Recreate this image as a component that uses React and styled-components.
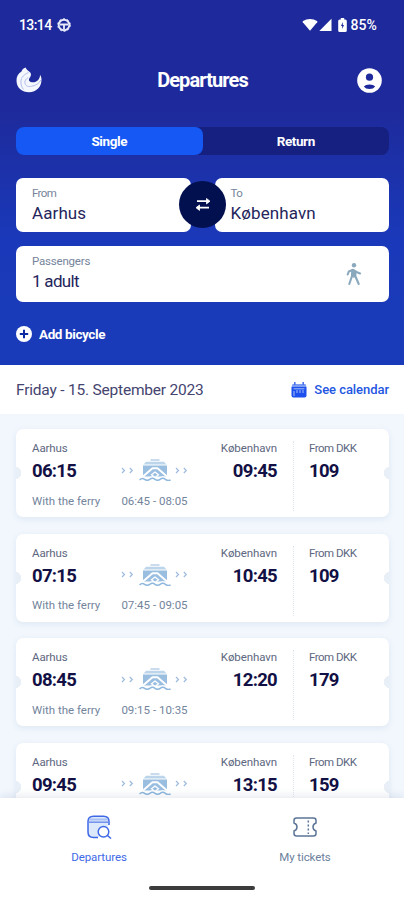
//IMPORT FUNCTIONALITY
import React, { useState } from 'react'
import styled, { createGlobalStyle } from 'styled-components'

const departures = [
	{ id: 1, from: '06:15', to: '09:45', price: '109', ferry: '06:45 - 08:05' },
	{ id: 2, from: '07:15', to: '10:45', price: '109', ferry: '07:45 - 09:05' },
	{ id: 3, from: '08:45', to: '12:20', price: '179', ferry: '09:15 - 10:35' },
	{ id: 4, from: '09:45', to: '13:15', price: '159' },
]

export default function App() {
	const [trip, setTrip] = useState('Single')

	return (
		<Screen>
			<GlobalStyle />
			<Search>
				<StatusBar>
					<StatusGroup $gap="5px">
						<StatusText $spacing="-0.6px">13:14</StatusText>
						<WheelIcon />
					</StatusGroup>
					<StatusGroup $gap="1px">
						<WifiIcon />
						<SignalIcon />
						<BatteryIcon />
						<StatusText $spacing="0.1px">85%</StatusText>
					</StatusGroup>
				</StatusBar>
				<Header>
					<LogoIcon />
					<Title>Departures</Title>
					<ProfileIcon />
				</Header>
				<Tabs>
					<Tab
						className={trip === 'Single' ? 'isActive' : ''}
						onClick={() => setTrip('Single')}
					>
						Single
					</Tab>
					<Tab
						className={trip === 'Return' ? 'isActive' : ''}
						onClick={() => setTrip('Return')}
					>
						Return
					</Tab>
				</Tabs>
				<Route>
					<Field>
						<FieldLabel $spacing="-0.6px">From</FieldLabel>
						<FieldValue>Aarhus</FieldValue>
					</Field>
					<Field>
						<FieldLabel $spacing="-0.6px">To</FieldLabel>
						<FieldValue>København</FieldValue>
					</Field>
					<SwapButton>
						<SwapIcon />
					</SwapButton>
				</Route>
				<Passengers>
					<div>
						<FieldLabel $spacing="-0.2px">Passengers</FieldLabel>
						<FieldValue $spacing="-0.7px">1 adult</FieldValue>
					</div>
					<WalkIcon />
				</Passengers>
				<AddBicycle>
					<PlusIcon />
					<AddLabel>Add bicycle</AddLabel>
				</AddBicycle>
			</Search>
			<DateBar>
				<DateText>Friday - 15. September 2023</DateText>
				<CalendarLink>
					<CalendarIcon />
					<CalendarText>See calendar</CalendarText>
				</CalendarLink>
			</DateBar>
			<List>
				{departures.map((departure) => (
					<Card key={departure.id}>
						<Place>Aarhus</Place>
						<Place $right>København</Place>
						<Time>{departure.from}</Time>
						<Crossing>
							<Chevrons />
							<FerryIcon />
							<Chevrons />
						</Crossing>
						<Time $right>{departure.to}</Time>
						{departure.ferry && (
							<>
								<Note>With the ferry</Note>
								<Note $center>{departure.ferry}</Note>
							</>
						)}
						<Price>
							<Place $spacing="-0.5px">From DKK</Place>
							<Time>{departure.price}</Time>
						</Price>
					</Card>
				))}
			</List>
			<Nav>
				<NavRow>
					<NavItem className="isActive" $shift="-4px">
						<DeparturesIcon />
						<NavLabel $spacing="-0.1px">Departures</NavLabel>
					</NavItem>
					<NavItem $shift="4px">
						<TicketIcon />
						<NavLabel $spacing="-0.1px">My tickets</NavLabel>
					</NavItem>
				</NavRow>
				<HomeIndicator />
			</Nav>
		</Screen>
	)
}

//ICONS
function WheelIcon() {
	return (
		<svg width="14" height="14" viewBox="0 0 14 14" fill="none">
			<circle cx="7" cy="7" r="5.3" stroke="#e8eafa" strokeWidth="1.9" />
			<circle cx="7" cy="7" r="6.3" stroke="#e8eafa" strokeWidth="1" strokeDasharray="2 2" />
			<path d="M3 6.500H11M7 7V11.500" stroke="#e8eafa" strokeWidth="1.800" />
		</svg>
	)
}

function WifiIcon() {
	return (
		<svg width="16" height="14" viewBox="0 0 16 14" fill="#fff">
			<path d="M8 12.800L.8 4.200Q.4 3.600 1 3.100Q4 1.100 8 1.100T15 3.100Q15.600 3.600 15.200 4.200Z" />
		</svg>
	)
}

function SignalIcon() {
	return (
		<svg width="13" height="14" viewBox="0 0 13 14" fill="#fff">
			<path d="M.3 13L12.500.7V13Z" />
		</svg>
	)
}

function BatteryIcon() {
	return (
		<Battery width="9" height="14" viewBox="0 0 9 14">
			<path d="M2.800 0H6.200V1.500H7.200Q8.800 1.500 8.800 3V12.500Q8.800 14 7.200 14H1.800Q.2 14 .2 12.500V3Q.2 1.500 1.800 1.500H2.800Z" fill="#fff" />
			<path d="M4.800 4L3 8H4.200V11L6 7H4.800Z" fill="#1e2a9b" />
		</Battery>
	)
}

function LogoIcon() {
	return (
		<svg width="26" height="26" viewBox="0 0 26 26">
			<path d="M9.500.5C7.500 1.200 6 2.800 5.500 4.500C2 6.500.3 10 .5 14C.8 21 6.200 25.300 13 25.300C20.500 25.300 25.700 19.500 25.500 12.500C25.400 10.500 25 9 24 8C24.100 12 21 15.300 17 15.300C15.300 15.300 14 14.800 13.300 14C12.500 12.800 13.200 11.200 14.200 10C15.300 8.500 15.300 6.500 14 5.200C12.500 4 10.500 2.500 9.500.5Z" fill="#f5f7ff" />
			<path d="M12.500 5.500C8.500 7.500 4.800 10 4.900 15C5 18 5.800 20.500 7.500 22.500M12.300 10.500C9.500 12 8.500 14 9 16.500C10 19.500 12.500 20 15.500 19.300C19.500 18.500 23 17 24.800 13" fill="none" stroke="#a9b5e6" strokeWidth=".9" />
		</svg>
	)
}

function ProfileIcon() {
	return (
		<svg width="25" height="25" viewBox="0 0 25 25">
			<circle cx="12.500" cy="12.500" r="12.300" fill="#fff" />
			<circle cx="12.500" cy="9.200" r="3.600" fill="#1e2a9b" />
			<path d="M6.800 18.500Q8.500 16.400 12.500 16.400T18.200 18.500Q16.500 21 12.500 21T6.800 18.500Z" fill="#1e2a9b" />
		</svg>
	)
}

function SwapIcon() {
	return (
		<svg width="16" height="15" viewBox="0 0 16 15" stroke="#fff" strokeWidth="1.700" fill="#fff">
			<path d="M2 4.200H12M14 10.700H4" />
			<path d="M11.500 1.500L15 4.200L11.500 6.900ZM4.500 8L1 10.700L4.500 13.400Z" strokeWidth=".8" />
		</svg>
	)
}

function WalkIcon() {
	return (
		<svg width="16" height="23" viewBox="0 0 16 23" fill="none" stroke="#8ba9bd" strokeWidth="2.100" strokeLinecap="round" strokeLinejoin="round">
			<circle cx="8" cy="2.300" r="2.200" fill="#8ba9bd" stroke="none" />
			<path d="M1.700 11.500L2.800 8.500L7 6.800L10.500 9L14 10.500M6.200 7.800L6 13L3.300 21M9.500 8.500L9.300 13L12.700 21M6 13.300H9.300" />
			<path d="M7.800 8V13" strokeWidth="3" />
		</svg>
	)
}

function PlusIcon() {
	return (
		<svg width="16" height="16" viewBox="0 0 16 16">
			<circle cx="8" cy="8" r="8" fill="#fff" />
			<path d="M8 3.800V12.200M3.800 8H12.200" stroke="#0f2aa5" strokeWidth="2" />
		</svg>
	)
}

function CalendarIcon() {
	return (
		<svg width="16" height="16" viewBox="0 0 16 16">
			<path d="M1.500 2H14.500L15.500 5H.5Z" fill="#7d9cf2" />
			<path d="M3.800 0V3M12.200 0V3" stroke="#4d76ee" strokeWidth="1.600" />
			<path d="M.5 5H15.500V13.500Q15.500 15.500 13.500 15.500H2.500Q.5 15.500.5 13.500Z" fill="#1d50ec" />
			<path d="M2.500 6.800H13.500M3 9V14M6 8V11M9 8V11M12 8V11" stroke="#a9c0fa" strokeWidth="1" />
		</svg>
	)
}

function Chevrons() {
	return (
		<svg width="13" height="7" viewBox="0 0 13 7" fill="none" stroke="#9dbbde" strokeWidth="1.200">
			<path d="M1 1L3.500 3.500L1 6M8.800 1L11.300 3.500L8.800 6" />
		</svg>
	)
}

function FerryIcon() {
	return (
		<svg width="32" height="22" viewBox="0 0 32 22">
			<path d="M11.500 1H20.500" stroke="#b7cfe6" strokeWidth="1.500" />
			<path d="M7 2.700H25L27.500 5.500H4.500Z" fill="#bdd5ea" />
			<path d="M4 6.500H28V17.500H4Z" fill="#99bee0" />
			<path d="M4 17.500L13.500 9.300H18.500L28 17.500" fill="none" stroke="#fff" strokeWidth="1.900" />
			<path d="M16 13L19.500 15.800L16 18.500L12.500 15.800Z" fill="#99bee0" stroke="#fff" strokeWidth="1.300" />
			<path d="M.5 19.500Q3 17.500 5.600 19T10.800 19T16 19T21.200 19T26.400 19T31.500 19.500" fill="none" stroke="#fff" strokeWidth="2" />
			<path d="M.5 21Q3 18.400 5.600 20.300T10.800 20.300T16 20.300T21.200 20.300T26.400 20.300T31.500 21" fill="none" stroke="#8fb8de" strokeWidth="1.500" />
		</svg>
	)
}

function DeparturesIcon() {
	return (
		<svg width="25" height="24" viewBox="0 0 25 24" fill="none" stroke="#3f68e6" strokeWidth="1.500">
			<path d="M11 22.500H6.500Q1 22.500 1 17V6.500Q1 1.200 6.500 1.200H16.500Q22 1.200 22 6.500V10" fill="#dbe9fb" />
			<path d="M2.300 4.500H20.700" stroke="#a9c0f5" strokeWidth="2" />
			<path d="M1.500 7.200H21.500" stroke="#6f8fee" />
			<circle cx="16.500" cy="16.800" r="5.300" fill="#fff" />
			<path d="M20.500 20.500L24 23.500" />
		</svg>
	)
}

function TicketIcon() {
	return (
		<svg width="24" height="20" viewBox="0 0 24 20" fill="none" stroke="#5c7597" strokeWidth="1.500">
			<path d="M3.500 1H20.500Q23 1 23 3.500V6Q20 7 20 10T23 14V16.500Q23 19 20.500 19H3.500Q1 19 1 16.500V14Q4 13 4 10T1 6V3.500Q1 1 3.500 1Z" />
			<path d="M15.300 3.500V17" strokeDasharray="2 2" />
		</svg>
	)
}

//STYLES
const GlobalStyle = createGlobalStyle`
	* {
		box-sizing: border-box;
	}
	body {
		margin: 0;
		font-family: Roboto, 'Liberation Sans', sans-serif;
	}
	p, h1 {
		margin: 0;
		white-space: nowrap;
	}
	svg {
		display: block;
		flex: none;
	}
	button {
		border: none;
		padding: 0;
		font-family: inherit;
		background: none;
	}
`

const Screen = styled.div`
	width: 404px;
	height: 900px;
	overflow: hidden;
	display: flex;
	flex-direction: column;
	background: #f2f7fd;
`

const Search = styled.section`
	height: 365px;
	flex: none;
	padding: 0 15px 0 16px;
	background: linear-gradient(#1e2a9b 0, #1e2a9b 108px, #1a39ba 240px, #193bb9 365px);
`

const StatusBar = styled.div`
	height: 49px;
	padding: 0 12px 0 3px;
	display: flex;
	justify-content: space-between;
	align-items: center;
`

const StatusGroup = styled.div`
	display: flex;
	align-items: center;
	gap: ${(props) => props.$gap};
`

const StatusText = styled.p`
	color: #fff;
	font-size: 14px;
	font-weight: 500;
	line-height: 16px;
	letter-spacing: ${(props) => props.$spacing};
`

const Battery = styled.svg`
	margin: 0 2px 0 5px;
`

const Header = styled.header`
	height: 62px;
	padding-right: 7px;
	display: flex;
	justify-content: space-between;
	align-items: center;
`

const Title = styled.h1`
	color: #fff;
	font-size: 20px;
	font-weight: 700;
	letter-spacing: -0.9px;
	padding-left: 6px;
`

const Tabs = styled.div`
	height: 28px;
	margin-top: 16px;
	display: grid;
	grid-template-columns: 1fr 1fr;
	border-radius: 8px;
	background: #152080;
`

const Tab = styled.button`
	color: #fff;
	font-size: 13.5px;
	font-weight: 700;
	letter-spacing: -0.4px;
	border-radius: 8px;
	&.isActive {
		background: #1658f3;
	}
`

const Route = styled.div`
	position: relative;
	height: 54px;
	margin-top: 23px;
	display: grid;
	grid-template-columns: 1fr 1fr;
	gap: 24px;
`

const Field = styled.div`
	padding: 8px 16px 0;
	border-radius: 7px;
	background: #fff;
`

const FieldLabel = styled.p`
	color: #75849a;
	font-size: 11.5px;
	line-height: 14px;
	letter-spacing: ${(props) => props.$spacing};
`

const FieldValue = styled.p`
	color: #25255c;
	font-size: 17px;
	line-height: 22px;
	letter-spacing: ${(props) => props.$spacing || '0.1px'};
	margin-top: 2px;
`

const SwapButton = styled.button`
	position: absolute;
	top: 3px;
	left: 163px;
	width: 47px;
	height: 47px;
	border-radius: 50%;
	background: #03104f;
	display: flex;
	justify-content: center;
	align-items: center;
`

const Passengers = styled(Field)`
	height: 56px;
	margin-top: 14px;
	padding-right: 27px;
	display: flex;
	justify-content: space-between;
	svg {
		margin-top: 9px;
	}
`

const AddBicycle = styled.button`
	margin-top: 24px;
	height: 16px;
	display: flex;
	align-items: center;
	gap: 7px;
`

const AddLabel = styled.p`
	color: #fff;
	font-size: 13.5px;
	font-weight: 700;
	letter-spacing: -0.4px;
`

const DateBar = styled.div`
	height: 49px;
	flex: none;
	padding: 0 15px 0 16px;
	display: flex;
	justify-content: space-between;
	align-items: center;
	background: #fff;
`

const DateText = styled.p`
	color: #44446f;
	font-size: 15.5px;
	letter-spacing: -0.2px;
`

const CalendarLink = styled.div`
	display: flex;
	align-items: center;
	gap: 7px;
`

const CalendarText = styled.p`
	color: #2356e2;
	font-size: 13px;
	font-weight: 500;
	letter-spacing: -0.05px;
`

const List = styled.div`
	flex: 1;
	min-height: 0;
	overflow: hidden;
	padding: 15px 15px 0 16px;
	display: flex;
	flex-direction: column;
	gap: 16.5px;
`

const Card = styled.article`
	height: 88px;
	flex: none;
	padding: 12px 16px 0;
	display: grid;
	grid-template-columns: 89px 67px 89px 1fr;
	grid-template-rows: 16px 29px 29px;
	align-items: center;
	border-radius: 7px;
	background: radial-gradient(circle at -1px 44px, #e9eff6 6px, transparent 6.5px),
		radial-gradient(circle at 374px 44px, #e9eff6 6px, transparent 6.5px), #fff;
	box-shadow: 0 2px 6px rgba(80, 120, 170, 0.12);
`

const Place = styled.p`
	color: #5d6780;
	font-size: 11.5px;
	line-height: 14px;
	padding-bottom: 2px;
	letter-spacing: ${(props) => props.$spacing || '-0.1px'};
	${(props) => props.$right && 'grid-column: 2 / 4; text-align: right;'}
`

const Time = styled.p`
	color: #121044;
	font-size: 18.5px;
	font-weight: 700;
	line-height: 29px;
	letter-spacing: -0.7px;
	${(props) => props.$right && 'text-align: right;'}
`

const Crossing = styled.div`
	display: flex;
	align-items: center;
	justify-content: space-between;
	padding-bottom: 3px;
`

const Note = styled.p`
	color: #73849c;
	font-size: 11.5px;
	letter-spacing: 0;
	${(props) => props.$center && 'text-align: center;'}
`

const Price = styled.div`
	grid-column: 4;
	grid-row: 1 / 4;
	align-self: start;
	height: 70px;
	margin-left: 16px;
	padding-left: 15px;
	border-left: 1px dotted #dfe6ee;
`

const Nav = styled.nav`
	position: relative;
	height: 102px;
	flex: none;
	background: #fff;
	box-shadow: 0 -2px 8px rgba(70, 100, 140, 0.14);
`

const NavRow = styled.div`
	height: 88px;
	display: grid;
	grid-template-columns: 1fr 1fr;
`

const NavItem = styled.div`
	display: grid;
	grid-template-rows: 57px 20px;
	justify-items: center;
	align-items: center;
	align-content: start;
	color: #6c7f9c;
	margin-left: ${(props) => props.$shift};
	&.isActive {
		color: #4169e8;
	}
`

const NavLabel = styled.p`
	font-size: 11.5px;
	line-height: 20px;
	letter-spacing: ${(props) => props.$spacing};
	margin-top: -16px;
`

const HomeIndicator = styled.div`
	width: 106px;
	height: 4px;
	margin: 0 auto;
	border-radius: 2px;
	background: #3c3c3c;
`
